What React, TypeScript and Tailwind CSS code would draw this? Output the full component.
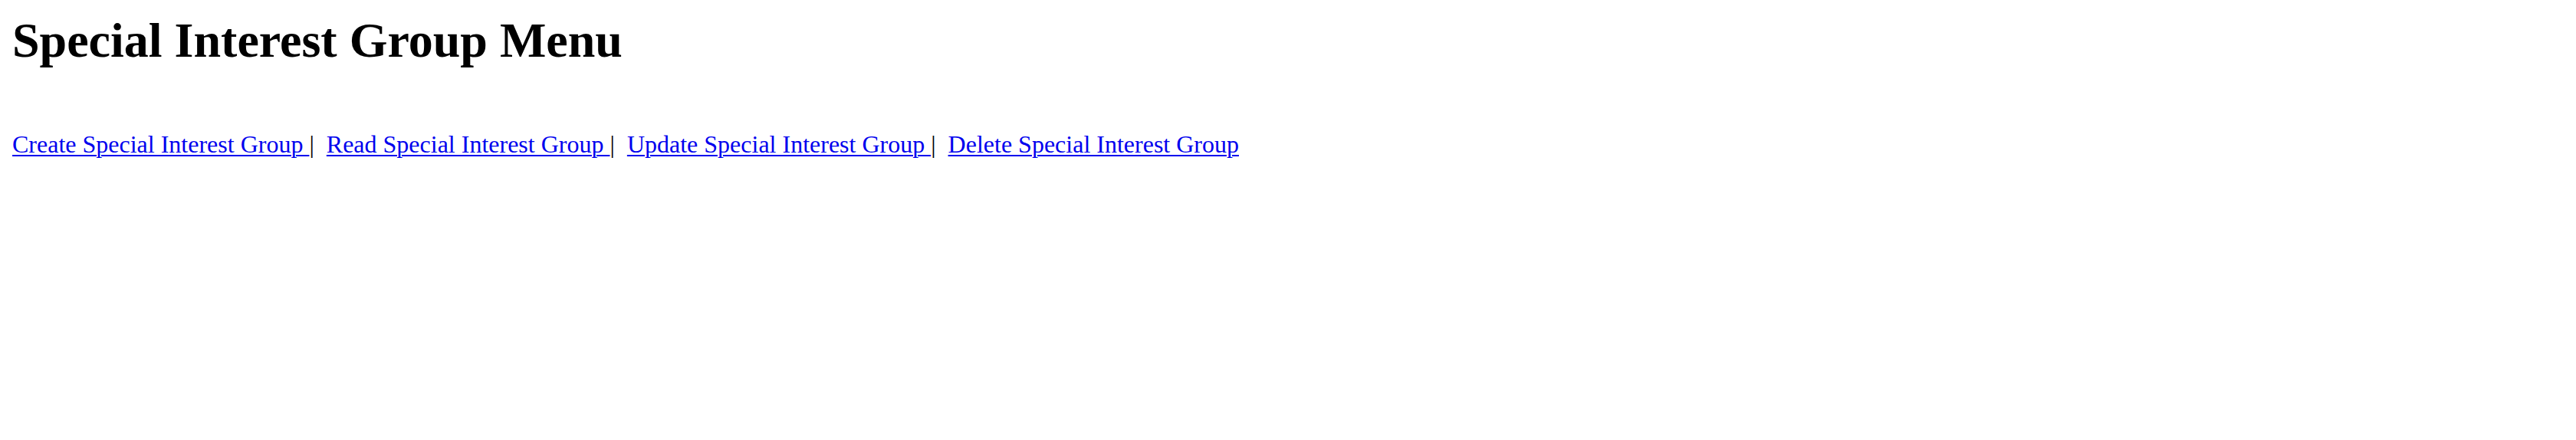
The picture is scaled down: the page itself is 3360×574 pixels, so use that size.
import React from "react";

const links = [
  "Create Special Interest Group ",
  "Read Special Interest Group ",
  "Update Special Interest Group ",
  "Delete Special Interest Group",
];

export default function App() {
  return (
    <div className="min-h-[574px] bg-white px-[16px] pt-[16px] text-black [font-family:'Liberation_Serif','Times_New_Roman',serif]">
      <h1 className="text-[64px] font-bold leading-[normal]">Special Interest Group Menu</h1>
      <div className="mt-[80px] text-[32px] leading-[normal] whitespace-pre">
        {links.map((t, i) => (
          <React.Fragment key={i}>
            <a href="#" className="text-[#0000ee] underline decoration-[2px] underline-offset-[3px]">
              {t}
            </a>
            {i < links.length - 1 ? "|\u00a0 " : null}
          </React.Fragment>
        ))}
      </div>
    </div>
  );
}
